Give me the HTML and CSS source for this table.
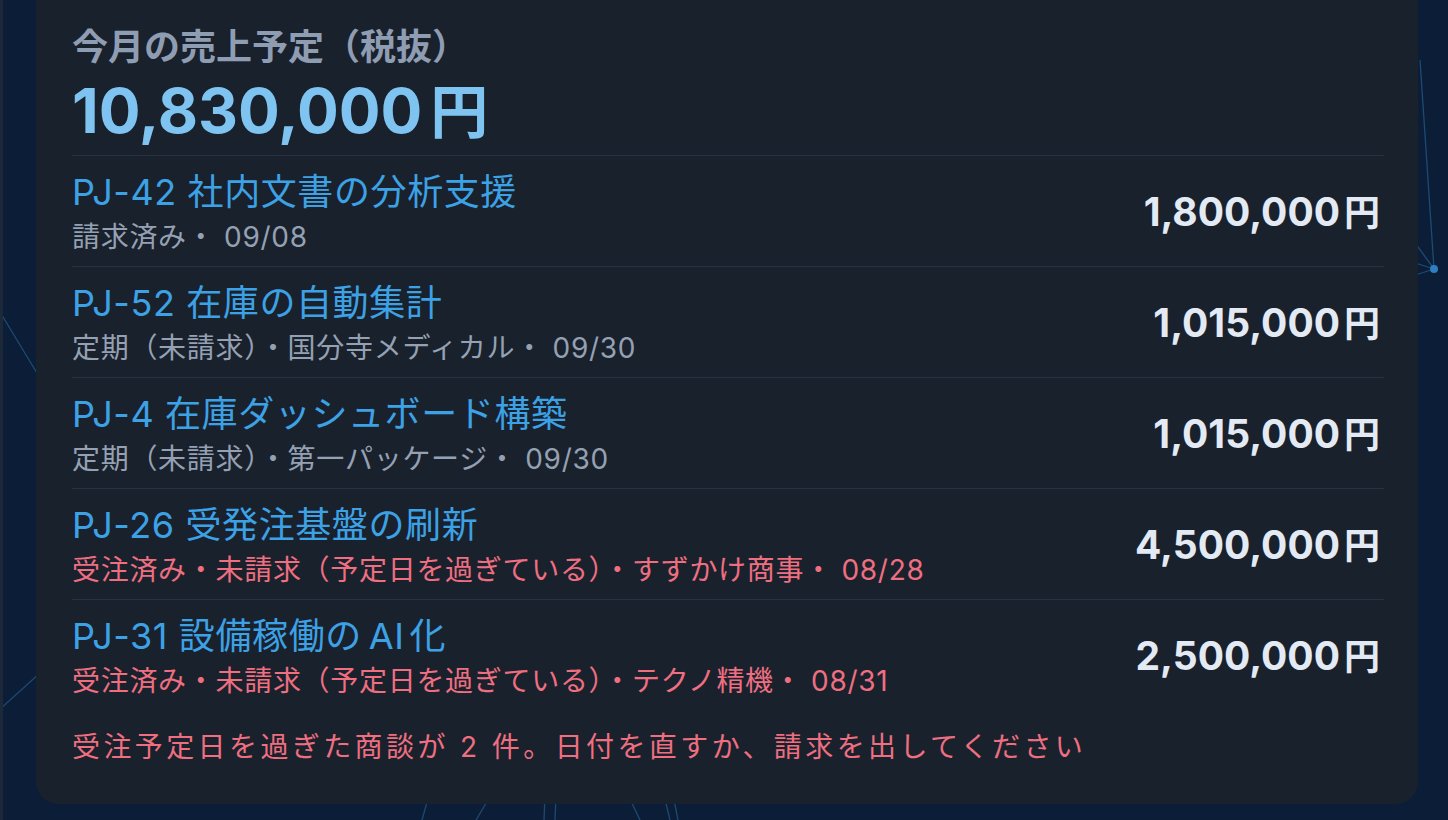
FILE: index.html
```html
<!DOCTYPE html>
<html lang="ja">
<head>
<meta charset="utf-8">
<title>今月の売上予定</title>
<link rel="stylesheet" href="styles.css">
</head>
<body>
<svg class="net" width="1448" height="820" viewBox="0 0 1448 820" aria-hidden="true">
  <g stroke="#1d4a74" stroke-width="1.3" fill="none">
    <line x1="0" y1="312" x2="40" y2="378"/>
    <line x1="0" y1="709" x2="40" y2="673"/>
    <line x1="1420" y1="60" x2="1434" y2="269"/>
    <line x1="1400" y1="222" x2="1434" y2="269"/>
    <line x1="1400" y1="258" x2="1434" y2="269"/>
    <line x1="1400" y1="280" x2="1434" y2="269"/>
    <line x1="429" y1="795" x2="422" y2="820"/>
    <line x1="491" y1="795" x2="476" y2="820"/>
    <line x1="545" y1="795" x2="544" y2="820"/>
    <line x1="556" y1="795" x2="555" y2="820"/>
    <line x1="628" y1="795" x2="640" y2="820"/>
    <line x1="664" y1="795" x2="670" y2="820"/>
    <line x1="673" y1="795" x2="678" y2="820"/>
  </g>
  <circle cx="1434" cy="269" r="4" fill="#2f7fc0"/>
</svg>
<div class="edge"></div>
<main class="page">
  <section class="card">
    <header class="card-head">
      <h2 class="label">今月の売上予定（税抜）</h2>
      <div class="total">10,830,000<span class="yen">円</span></div>
    </header>
    <ul class="deals">
      <li class="deal">
        <div class="deal-info">
          <a class="deal-title" href="#">PJ-42 社内文書の分析支援</a>
          <div class="deal-meta">請求済み・ 09/08</div>
        </div>
        <div class="deal-amount">1,800,000<span class="yen">円</span></div>
      </li>
      <li class="deal">
        <div class="deal-info">
          <a class="deal-title" href="#">PJ-52 在庫の自動集計</a>
          <div class="deal-meta">定期（未請求）・国分寺メディカル・ 09/30</div>
        </div>
        <div class="deal-amount">1,015,000<span class="yen">円</span></div>
      </li>
      <li class="deal">
        <div class="deal-info">
          <a class="deal-title" href="#">PJ-4 在庫ダッシュボード構築</a>
          <div class="deal-meta">定期（未請求）・第一パッケージ・ 09/30</div>
        </div>
        <div class="deal-amount">1,015,000<span class="yen">円</span></div>
      </li>
      <li class="deal">
        <div class="deal-info">
          <a class="deal-title" href="#">PJ-26 受発注基盤の刷新</a>
          <div class="deal-meta is-overdue">受注済み・未請求（予定日を過ぎている）・すずかけ商事・ 08/28</div>
        </div>
        <div class="deal-amount">4,500,000<span class="yen">円</span></div>
      </li>
      <li class="deal">
        <div class="deal-info">
          <a class="deal-title" href="#">PJ-31 設備稼働の<span class="latin">AI</span>化</a>
          <div class="deal-meta is-overdue">受注済み・未請求（予定日を過ぎている）・テクノ精機・ 08/31</div>
        </div>
        <div class="deal-amount">2,500,000<span class="yen">円</span></div>
      </li>
    </ul>
    <p class="warning">受注予定日を過ぎた商談が 2 件。日付を直すか、請求を出してください</p>
  </section>
</main>
</body>
</html>
```

FILE: styles.css
```css
* {
  box-sizing: border-box;
}

html,
body {
  margin: 0;
  padding: 0;
  height: 820px;
  overflow: hidden;
}

body {
  background: #0c1d37;
  font-family: Inter, "Noto Sans CJK JP", sans-serif;
  position: relative;
}

.net {
  position: absolute;
  left: 0;
  top: 0;
}

.edge {
  position: absolute;
  left: 0;
  top: 0;
  width: 3px;
  height: 820px;
  background: #1d2938;
}

.page {
  position: relative;
  padding: 0 30px 0 36px;
}

.card {
  margin-top: -24px;
  background: #19212d;
  border-radius: 22px;
  padding: 46px 34px 37px 36px;
}

.card-head {
  display: flex;
  flex-direction: column;
}

.label {
  margin: 0;
  font-size: 36px;
  line-height: 50px;
  font-weight: 700;
  color: #8f9db2;
}

.total {
  height: 77px;
  font-size: 62px;
  line-height: 77px;
  font-weight: 700;
  color: #7fc3f1;
}

.total .yen {
  font-size: 58px;
  line-height: 1;
  margin-left: 8px;
}

.deals {
  list-style: none;
  margin: 6px 0 0;
  padding: 0;
}

.deal {
  display: flex;
  align-items: center;
  justify-content: space-between;
  border-top: 1px solid #283141;
  padding: 13px 0 11px;
}

.deal-info {
  display: flex;
  flex-direction: column;
}

.deal-title {
  font-size: 36px;
  line-height: 46px;
  letter-spacing: 0.6px;
  color: #3da1e5;
  text-decoration: none;
}

.deal-title .latin {
  margin: 0 5px 0 7px;
}

.deal-meta {
  margin-top: 4px;
  font-size: 28px;
  line-height: 36px;
  letter-spacing: 0.7px;
  color: #95a1b3;
}

.deal-meta.is-overdue {
  color: #ef6f80;
}

.deal-amount {
  font-size: 39px;
  line-height: 50px;
  font-weight: 700;
  color: #e3eaf3;
  padding-right: 4px;
}

.deal-amount .yen {
  font-size: 36px;
  line-height: 1;
  margin-left: 4px;
}

.warning {
  margin: 17px 0 0;
  font-size: 28px;
  line-height: 40px;
  letter-spacing: 3.4px;
  color: #ef6f80;
}
```
